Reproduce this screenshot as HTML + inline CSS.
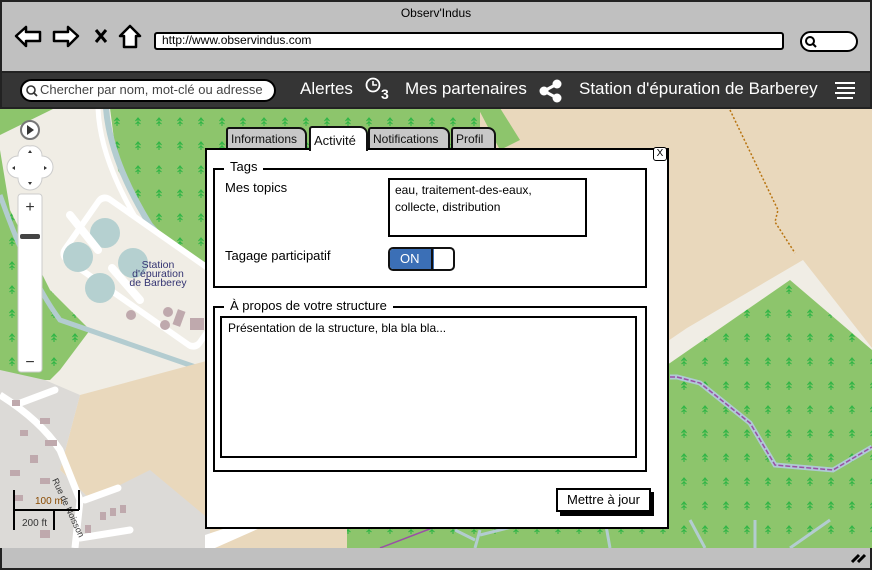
<!DOCTYPE html>
<html><head><meta charset="utf-8">
<style>
*{margin:0;padding:0;box-sizing:border-box}
body{width:872px;height:570px;overflow:hidden;font-family:"Liberation Sans",sans-serif;background:#fff;position:relative}
.abs{position:absolute}
#top{left:0;top:0;width:872px;height:72px;background:#c0c0c0;border:2px solid #222;border-bottom:none}
#bar{left:0;top:71px;width:872px;height:38px;background:#353535;border:2px solid #222}
#bot{left:0;top:548px;width:872px;height:22px;background:#c0c0c0;border:2px solid #222;border-top:none}
.t{position:absolute;white-space:nowrap;color:#000}
.w{color:#fff}
.tab{position:absolute;top:127px;height:22px;background:#c8c8c8;border:2px solid #111;border-bottom:none;border-radius:3px 8px 0 0;font-size:12px;padding:3px 3px;color:#111;overflow:hidden}
</style></head><body>
<svg class="abs" style="left:0;top:108px" width="872" height="440" viewBox="0 108 872 440">
<defs>
<pattern id="tr" x="8" y="116" width="21" height="24" patternUnits="userSpaceOnUse">
<path d="M4 2v8M1.5 5l2.5-3 2.5 3M1.5 8l2.5-2 2.5 2" stroke="#2fb545" stroke-width="1.1" fill="none"/>
</pattern>
</defs>
<rect x="0" y="108" width="872" height="440" fill="#f0ede5"/>
<polygon points="470,108 872,108 872,348 803,260 687,328 640,360 470,360" fill="#e9d8bc"/>
<polygon points="640,380 670,363 790,280 872,350 872,548 640,548" fill="#8dc56c"/>
<polygon points="640,380 670,363 790,280 872,350 872,548 640,548" fill="url(#tr)"/>
<polygon points="478,108 500,108 520,140 500,150" fill="#8dc56c"/>
<polyline points="730,110 778,210 775,222 795,253" fill="none" stroke="#b8730f" stroke-width="1.5" stroke-dasharray="2,2"/>
<polyline points="670,377 677,377 700,383 750,423 775,465 833,470 872,447" fill="none" stroke="#b0c9d6" stroke-width="5"/>
<polyline points="670,377 677,377 700,383 750,423 775,465 833,470 872,447" fill="none" stroke="#9a4fa6" stroke-width="1.5" stroke-dasharray="5,2"/>
<polygon points="110,108 480,108 480,300 205,300 150,230 118,170" fill="#8dc56c"/>
<polygon points="110,108 480,108 480,300 205,300 150,230 118,170" fill="url(#tr)"/>
<polygon points="0,108 55,108 0,135" fill="#8dc56c"/>
<polygon points="0,150 10,210 50,290 90,330 60,370 50,380 0,380" fill="#8dc56c"/>
<polygon points="0,150 10,210 50,290 90,330 60,370 50,380 0,380" fill="url(#tr)"/>
<path d="M106 108 Q110 160 150 225 L210 292" fill="none" stroke="#b3ccd0" stroke-width="6"/>
<path d="M98 108 Q100 160 140 225 L210 300" fill="none" stroke="#fff" stroke-width="5"/>
<path d="M0 195 Q30 280 60 320 L210 372" fill="none" stroke="#b3ccd0" stroke-width="5"/>
<polygon points="80,395 210,360 210,548 140,548 60,470" fill="#e9d8bc"/>
<polygon points="210,360 640,360 640,548 210,548" fill="#e9d8bc"/>
<polygon points="347,520 872,520 872,548 347,548" fill="#8dc56c"/>
<polygon points="347,520 872,520 872,548 347,548" fill="url(#tr)"/>
<path d="M380 548 L440 525" stroke="#9a4fa6" stroke-width="1.5"/>
<path d="M480 535 L520 525 M475 548 L480 530 M475 540 L455 530 M605 520 L610 548 M690 520 L705 548 M755 520 L755 548 M830 520 L790 548" stroke="#b3ccd0" stroke-width="3"/>
<polygon points="0,370 45,380 80,395 60,470 140,548 0,548" fill="#dcdad7"/>
<polygon points="90,500 150,470 210,520 210,548 100,548" fill="#dcdad7"/>
<polygon points="205,548 205,535 250,520 260,528 215,548" fill="#fff"/>
<path d="M0 395 Q40 420 60 450 L80 500 L75 548" fill="none" stroke="#fff" stroke-width="7"/>
<path d="M55 390 L15 405" stroke="#fff" stroke-width="7" stroke-linecap="round"/>
<path d="M85 500 L118 488" stroke="#fff" stroke-width="7" stroke-linecap="round"/>
<path d="M80 538 L130 530" stroke="#fff" stroke-width="7" stroke-linecap="round"/>
<g fill="#bfa9ad">
<rect x="12" y="400" width="8" height="6"/><rect x="20" y="430" width="8" height="6"/><rect x="40" y="418" width="10" height="6"/><rect x="45" y="440" width="12" height="6"/><rect x="30" y="455" width="8" height="8"/><rect x="10" y="470" width="10" height="6"/><rect x="40" y="478" width="10" height="6"/><rect x="15" y="495" width="8" height="6"/><rect x="100" y="512" width="6" height="8"/><rect x="110" y="508" width="6" height="8"/><rect x="120" y="505" width="6" height="8"/><rect x="85" y="525" width="6" height="8"/><rect x="40" y="530" width="10" height="8"/>
</g>
<g transform="rotate(35 120 270)">
<rect x="60" y="215" width="170" height="80" rx="10" fill="#fff"/>
<rect x="66" y="221" width="158" height="68" rx="6" fill="#f0ede5"/>
</g>
<circle cx="78" cy="257" r="15" fill="#b5d0d0"/><circle cx="105" cy="233" r="15" fill="#b5d0d0"/><circle cx="133" cy="263" r="15" fill="#b5d0d0"/><circle cx="100" cy="288" r="15" fill="#b5d0d0"/>
<path d="M70 215 L98 250" stroke="#fff" stroke-width="8" stroke-linecap="round"/>
<path d="M112 268 L140 300" stroke="#fff" stroke-width="8" stroke-linecap="round"/>
<g fill="#bfa9ad"><circle cx="131" cy="315" r="5"/><circle cx="168" cy="312" r="5"/><circle cx="165" cy="325" r="5"/><rect x="175" y="310" width="8" height="16" transform="rotate(20 179 318)"/><rect x="190" y="318" width="14" height="12"/></g>
<text x="158" y="268" font-size="10.5" fill="#333372" text-anchor="middle" font-family="Liberation Sans">Station</text>
<text x="158" y="277" font-size="10.5" fill="#333372" text-anchor="middle" font-family="Liberation Sans">d'épuration</text>
<text x="158" y="286" font-size="10.5" fill="#333372" text-anchor="middle" font-family="Liberation Sans">de Barberey</text>
<text x="52" y="480" font-size="9" fill="#333" transform="rotate(65 52 480)" font-family="Liberation Sans">Rue de Noisson</text>
<circle cx="30" cy="130" r="9" fill="#fff" stroke="#777" stroke-width="2"/><path d="M27 125l7 5-7 5z" fill="#333"/>
<path d="M30 146 a10 10 0 0 1 12 10 a10 10 0 0 1 0 22 a10 10 0 0 1 -24 0 a10 10 0 0 1 0 -22 a10 10 0 0 1 12 -10z" fill="#fff" stroke="#ccc"/>
<path d="M28 153h4l-2-3zM28 182h4l-2 3zM15 166v4l-3-2zM44 166v4l3-2z" fill="#333"/>
<rect x="18" y="194" width="24" height="178" rx="3" fill="#fff" stroke="#ccc"/>
<text x="30" y="212" font-size="16" text-anchor="middle" fill="#333">+</text>
<text x="30" y="367" font-size="16" text-anchor="middle" fill="#333">−</text>
<rect x="20" y="234" width="20" height="5" rx="2" fill="#444"/>
<path d="M14 490v40M14 510h65M79 490v20M54 510v20" stroke="#000" stroke-width="2" fill="none"/>
<text x="35" y="504" font-size="10" fill="#8a4a00" font-family="Liberation Sans">100 m</text>
<text x="22" y="526" font-size="10" fill="#333" font-family="Liberation Sans">200 ft</text>
</svg>

<div id="top" class="abs"></div>
<div class="t" style="left:0;width:872px;top:6px;text-align:center;font-size:12px">Observ'Indus</div>
<svg class="abs" style="left:14px;top:24px" width="130" height="26">
<path d="M2 12 L12 3 V8 H26 V17 H12 V22 Z" fill="#fff" stroke="#000" stroke-width="2.5" stroke-linejoin="round"/>
<path d="M64 12 L54 3 V8 H40 V17 H54 V22 Z" fill="#fff" stroke="#000" stroke-width="2.5" stroke-linejoin="round"/>
<path d="M82 6 L92 18 M92 6 L82 18" stroke="#000" stroke-width="3"/>
<path d="M106 12 L116 2 L126 12 H122 V23 H110 V12 Z" fill="#fff" stroke="#000" stroke-width="2.5" stroke-linejoin="round"/>
</svg>
<div class="abs" style="left:154px;top:32px;width:630px;height:18px;background:#fff;border:2px solid #000;border-radius:3px"></div>
<div class="t" style="left:162px;top:33px;font-size:12px">http://www.observindus.com</div>
<div class="abs" style="left:800px;top:31px;width:58px;height:21px;background:#fff;border:2px solid #000;border-radius:11px"></div>
<svg class="abs" style="left:804px;top:35px" width="14" height="14"><circle cx="6" cy="6" r="4" fill="none" stroke="#000" stroke-width="2"/><path d="M9 9l3 3" stroke="#000" stroke-width="2"/></svg>

<div id="bar" class="abs"></div>
<div class="abs" style="left:20px;top:79px;width:256px;height:23px;background:#fff;border:2px solid #000;border-radius:12px"></div>
<svg class="abs" style="left:25px;top:84px" width="14" height="14"><circle cx="6" cy="6" r="4" fill="none" stroke="#333" stroke-width="1.6"/><path d="M9 9l3 3" stroke="#333" stroke-width="1.8"/></svg>
<div class="t" style="left:40px;top:82px;font-size:13px;color:#444">Chercher par nom, mot-clé ou adresse</div>
<div class="t w" style="left:300px;top:79px;font-size:17px">Alertes</div>
<svg class="abs" style="left:364px;top:76px" width="30" height="26"><circle cx="9" cy="9" r="6.5" fill="none" stroke="#fff" stroke-width="1.8"/><path d="M9 5v4h4" stroke="#fff" stroke-width="1.6" fill="none"/><text x="17" y="23" font-size="14" font-weight="bold" fill="#fff" font-family="Liberation Sans">3</text></svg>
<div class="t w" style="left:405px;top:79px;font-size:17px">Mes partenaires</div>
<svg class="abs" style="left:538px;top:78px" width="26" height="26"><path d="M6 13L19 6M6 13L19 20" stroke="#fff" stroke-width="3"/><circle cx="6" cy="13" r="4.5" fill="#fff"/><circle cx="19" cy="6" r="4.5" fill="#fff"/><circle cx="19" cy="20" r="4.5" fill="#fff"/></svg>
<div class="t w" style="left:579px;top:79px;font-size:17px">Station d'épuration de Barberey</div>
<svg class="abs" style="left:833px;top:78px" width="26" height="26"><path d="M2 5h20M4 10h18M2 15h20M4 20h16" stroke="#fff" stroke-width="2"/></svg>

<div id="bot" class="abs"></div>
<svg class="abs" style="left:849px;top:549px" width="18" height="16"><path d="M3 13l7-7M9 13l7-7" stroke="#000" stroke-width="3"/></svg>

<div class="tab" style="left:226px;width:81px">Informations</div>
<div class="tab" style="left:368px;width:82px">Notifications</div>
<div class="tab" style="left:451px;width:45px">Profil</div>
<div class="tab" style="left:309px;top:126px;height:25px;width:59px;background:#fff;z-index:3;padding-top:5px;font-size:13px">Activité</div>
<div class="abs" style="left:205px;top:148px;width:464px;height:381px;background:#fff;border:2px solid #000;z-index:2"></div>
<div class="abs" style="z-index:4;left:653px;top:147px;width:14px;height:14px;border:1px solid #000;border-radius:3px;background:#fff;font-size:10px;text-align:center;line-height:12px">X</div>
<div class="abs" style="z-index:4;left:213px;top:168px;width:434px;height:120px;border:2px solid #000"></div>
<div class="t" style="z-index:5;left:224px;top:159px;background:#fff;padding:0 6px;font-size:13px">Tags</div>
<div class="t" style="z-index:5;left:225px;top:180px;font-size:13px">Mes topics</div>
<div class="abs" style="z-index:5;left:388px;top:178px;width:199px;height:59px;border:2px solid #000;font-size:12px;line-height:17px;padding:2px 5px">eau, traitement-des-eaux,<br>collecte, distribution</div>
<div class="t" style="z-index:5;left:225px;top:248px;font-size:13px">Tagage participatif</div>
<div class="abs" style="z-index:5;left:388px;top:247px;width:67px;height:24px;border:2px solid #111;border-radius:5px;background:#fff;overflow:hidden">
<div style="width:44px;height:100%;background:#3b6fb6;color:#fff;font-size:13px;line-height:20px;padding-left:10px">ON</div></div>
<div class="abs" style="z-index:5;left:431px;top:247px;width:2px;height:24px;background:#111"></div>
<div class="abs" style="z-index:4;left:213px;top:306px;width:434px;height:166px;border:2px solid #000"></div>
<div class="t" style="z-index:5;left:224px;top:298px;background:#fff;padding:0 6px;font-size:13px">À propos de votre structure</div>
<div class="abs" style="z-index:5;left:220px;top:316px;width:417px;height:142px;border:2px solid #000"></div>
<div class="t" style="z-index:5;left:228px;top:321px;font-size:12px">Présentation de la structure, bla bla bla...</div>
<div class="abs" style="z-index:5;left:560px;top:492px;width:94px;height:24px;background:#000"></div>
<div class="abs" style="z-index:6;left:556px;top:488px;width:95px;height:24px;background:#fff;border:2px solid #000;font-size:13px;text-align:center;line-height:20px">Mettre à jour</div>
</body></html>
